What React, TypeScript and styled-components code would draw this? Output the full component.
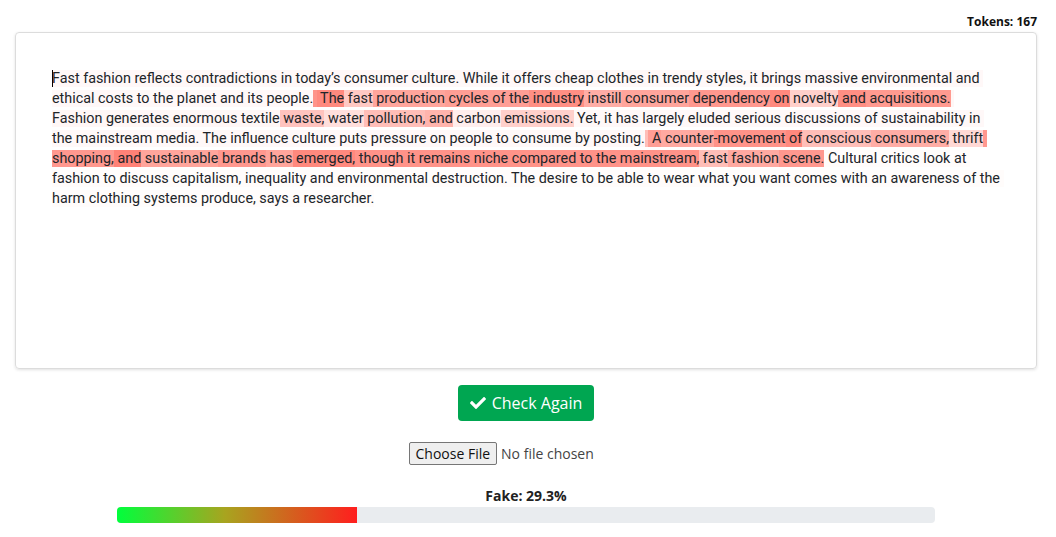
import React from 'react';
import styled, { createGlobalStyle } from 'styled-components';
import { FaCheck } from 'react-icons/fa';

const GlobalStyle = createGlobalStyle`
  body {
    margin: 0;
    background: #ffffff;
    font-family: Roboto, 'Open Sans', sans-serif;
    color: #212529;
  }
`;

const Page = styled.div`
  padding: 13px 19px 0 15px;
`;

const TokenCount = styled.div`
  text-align: right;
  font-family: 'Open Sans', sans-serif;
  font-weight: 700;
  font-size: 12px;
  line-height: 18px;
  color: #111;
  margin-bottom: 1px;
`;

const Editor = styled.div`
  box-sizing: border-box;
  height: 337px;
  border: 1px solid #dcdcdc;
  border-radius: 4px;
  box-shadow: 0 1px 3px rgba(0, 0, 0, 0.12);
  padding: 36px 36px 34px;
  font-family: Roboto, sans-serif;
  font-size: 14.35px;
  line-height: 20px;
  color: #212529;
`;

const Caret = styled.span`
  display: inline-block;
  width: 0;
  height: 17px;
  border-left: 1px solid #000;
  vertical-align: -4px;
  margin-right: -1px;
`;

const Token = styled.span<{ $alpha: number }>`
  background: rgba(255, 40, 20, ${p => p.$alpha});
  white-space: pre-wrap;
`;

const Controls = styled.div`
  display: flex;
  flex-direction: column;
  align-items: center;
`;

const CheckButton = styled.button`
  display: flex;
  align-items: center;
  gap: 6px;
  margin-top: 16px;
  padding: 6px 12px;
  border: none;
  border-radius: 4px;
  background: #00a651;
  color: #fff;
  font-family: 'Open Sans', sans-serif;
  font-size: 16px;
  line-height: 24px;
  cursor: pointer;
`;

const FileInput = styled.input`
  margin-top: 21px;
  margin-left: 38px;
  font-family: 'Open Sans', sans-serif;
  font-size: 14px;
  color: #444;

  &::file-selector-button {
    font-family: 'Open Sans', sans-serif;
    font-size: 14px;
    color: #111;
    padding: 1px 6px;
    margin-right: 4px;
    border: 1px solid #767676;
    border-radius: 2px;
    background: #efefef;
  }
`;

const ScoreLabel = styled.div`
  margin-top: 22px;
  font-family: 'Open Sans', sans-serif;
  font-weight: 700;
  font-size: 14px;
  line-height: 18px;
  color: #222;
`;

const Track = styled.div`
  width: 80%;
  height: 16px;
  margin-top: 2px;
  border-radius: 4px;
  background: #e9ecef;
  overflow: hidden;
`;

const Fill = styled.div`
  height: 100%;
  background: linear-gradient(90deg, #00ff3c 0%, #a8a41f 45%, #ff1e1e 100%);
`;

const F = 0.03;

const tokens: [string, number][] = [
  ['Fast fashion reflects contradictions in today’s consumer culture. While it offers cheap clothes in trendy styles, it brings massive environmental and ethical costs to the planet and its people.', F],
  [' ', 0.5],
  [' The', 0.55],
  [' fast', 0.25],
  [' production', 0.42],
  [' cycles of the', 0.45],
  [' industry', 0.52],
  [' instill', 0.38],
  [' consumer', 0.42],
  [' dependency', 0.48],
  [' on', 0.55],
  [' novelty', 0.22],
  [' and', 0.52],
  [' acquisitions.', 0.47],
  [' Fashion generates enormous textile', 0.04],
  [' waste,', 0.28],
  [' water', 0.15],
  [' pollution,', 0.3],
  [' and', 0.35],
  [' carbon', 0.08],
  [' emissions.', 0.22],
  [' Yet, it has largely eluded serious discussions of sustainability in the mainstream media. The influence culture puts pressure on people to consume by posting.', F],
  [' ', 0.3],
  [' A', 0.45],
  [' counter', 0.4],
  ['-movement', 0.5],
  [' of', 0.55],
  [' conscious', 0.3],
  [' consumers,', 0.38],
  [' thrift', 0.18],
  [' shopping,', 0.48],
  [' and', 0.58],
  [' sustainable', 0.42],
  [' brands', 0.48],
  [' has', 0.42],
  [' emerged,', 0.55],
  [' though it remains niche compared to the mainstream,', 0.5],
  [' fast', 0.3],
  [' fashion', 0.4],
  [' scene.', 0.48],
  [' Cultural critics look at fashion to discuss capitalism, inequality and environmental destruction. The desire to be able to wear what you want comes with an awareness of the harm clothing systems produce, says a researcher.', 0.015],
];

const App: React.FC = () => {
  const fake = 29.3;
  return (
    <Page>
      <GlobalStyle />
      <TokenCount>Tokens: 167</TokenCount>
      <Editor>
        <Caret />
        {tokens.map(([text, alpha], i) => (
          <Token key={i} $alpha={alpha}>{text}</Token>
        ))}
      </Editor>
      <Controls>
        <CheckButton>
          <FaCheck size={16} />
          Check Again
        </CheckButton>
        <FileInput type="file" />
        <ScoreLabel>Fake: {fake}%</ScoreLabel>
        <Track>
          <Fill style={{ width: `${fake}%` }} />
        </Track>
      </Controls>
    </Page>
  );
};

export default App;
